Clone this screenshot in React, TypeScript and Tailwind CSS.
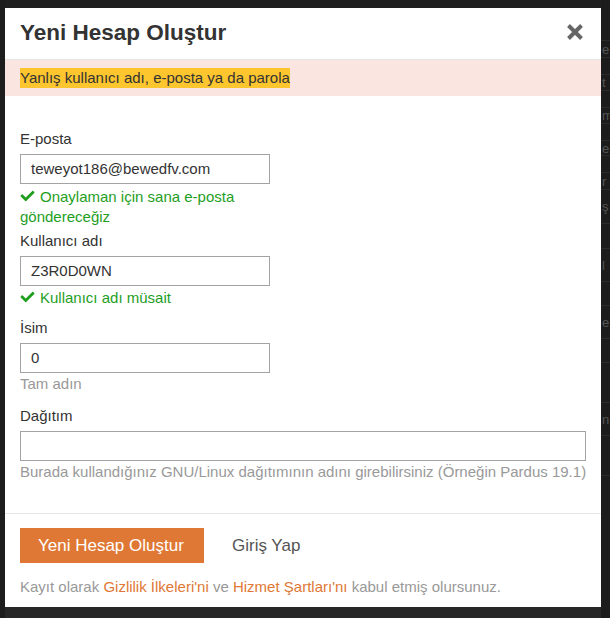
import React from "react";
import { FaCheck } from "react-icons/fa";

const font = { fontFamily: "'Liberation Sans', Arial, sans-serif" };

function Check({ children }: { children: React.ReactNode }) {
  return (
    <div className="text-[15px] leading-[20px] text-[#1f9e1f] w-[250px]">
      <FaCheck className="inline-block align-[-1px] mr-[5px] w-[15px] h-[14px]" />
      {children}
    </div>
  );
}

function Field({ value, wide }: { value: string; wide?: boolean }) {
  return (
    <div
      className={`h-[30px] border border-[#a3a3a3] bg-white flex items-center pl-[10px] text-[15px] text-[#333] ${
        wide ? "w-[566px]" : "w-[250px]"
      }`}
    >
      {value}
    </div>
  );
}

function Label({ children, className = "" }: { children: React.ReactNode; className?: string }) {
  return <div className={`text-[15px] leading-[20px] text-[#333] mb-[5px] ${className}`}>{children}</div>;
}

export default function App() {
  const strip = [
    { h: 41, t: "" },
    { h: 17, t: "e" },
    { h: 17, t: "" },
    { h: 16, t: "t" },
    { h: 17, t: "" },
    { h: 16, t: "m" },
    { h: 17, t: "" },
    { h: 15, t: "e" },
    { h: 17, t: "" },
    { h: 17, t: "r" },
    { h: 34, t: "ş" },
    { h: 25, t: "" },
    { h: 33, t: "l" },
    { h: 24, t: "" },
    { h: 33, t: "e" },
    { h: 24, t: "" },
    { h: 40, t: "" },
    { h: 33, t: "n" },
    { h: 40, t: "" },
  ];
  return (
    <div style={font} className="w-[610px] h-[618px] bg-[#222222] flex overflow-hidden">
      <div className="w-[5px] shrink-0 bg-[#1d1d1d]" />
      <div className="flex flex-col">
        <div className="h-[8px] bg-[#1f1f1f]" />
        <div className="w-[596px] h-[599px] bg-white flex flex-col">
          <div className="h-[52px] border-b border-[#e6e6e6] flex items-center justify-between pl-[15px] pr-[17px]">
            <div className="text-[22.5px] font-bold text-[#333] leading-none">Yeni Hesap Oluştur</div>
            <svg width="18" height="18" viewBox="0 0 18 18" className="mt-[-4px]">
              <path d="M2.5 2.5 L15.5 15.5 M15.5 2.5 L2.5 15.5" stroke="#666" strokeWidth="4" strokeLinecap="butt" />
            </svg>
          </div>
          <div className="h-[36px] bg-[#fae5e0] flex items-center pl-[15px]">
            <span className="bg-[#fdc52e] text-[15px] leading-[20px] text-[#333]">
              Yanlış kullanıcı adı, e-posta ya da parola
            </span>
          </div>
          <div className="pl-[15px] pt-[33px] flex-1">
            <Label>E-posta</Label>
            <Field value="teweyot186@bewedfv.com" />
            <div className="mt-[3px]">
              <Check>Onaylaman için sana e-posta göndereceğiz</Check>
            </div>
            <Label className="mt-[4px]">Kullanıcı adı</Label>
            <Field value="Z3R0D0WN" />
            <div className="mt-[2px]">
              <Check>Kullanıcı adı müsait</Check>
            </div>
            <Label className="mt-[10px]">İsim</Label>
            <Field value="0" />
            <div className="text-[15px] leading-[20px] text-[#999] mt-[1px]">Tam adın</div>
            <Label className="mt-[12px]">Dağıtım</Label>
            <Field value="" wide />
            <div className="text-[15px] leading-[20px] text-[#999] mt-[1px]">
              Burada kullandığınız GNU/Linux dağıtımının adını girebilirsiniz (Örneğin Pardus 19.1)
            </div>
          </div>
          <div className="h-[94px] border-t border-[#e6e6e6] pl-[15px] pt-[14px]">
            <div className="flex items-center">
              <div className="h-[35px] w-[184px] bg-[#e07835] text-white text-[17px] flex items-center pl-[18px]">
                Yeni Hesap Oluştur
              </div>
              <div className="ml-[28px] text-[17px] text-[#555]">Giriş Yap</div>
            </div>
            <div className="mt-[14px] text-[15px] leading-[20px] text-[#999]">
              Kayıt olarak <span className="text-[#e07835]">Gizlilik İlkeleri'ni</span> ve{" "}
              <span className="text-[#e07835]">Hizmet Şartları'nı</span> kabul etmiş olursunuz.
            </div>
          </div>
        </div>
        <div className="flex-1 bg-[#272727]" />
      </div>
      <div className="w-[9px] shrink-0 flex flex-col bg-[#1c1c1c] overflow-hidden">
        {strip.map((r, i) => (
          <div
            key={i}
            style={{ height: r.h }}
            className="border-b border-[#2b2b2b] text-[13px] text-[#555] leading-none flex items-center whitespace-nowrap pl-[1px]"
          >
            {r.t}
          </div>
        ))}
      </div>
    </div>
  );
}
